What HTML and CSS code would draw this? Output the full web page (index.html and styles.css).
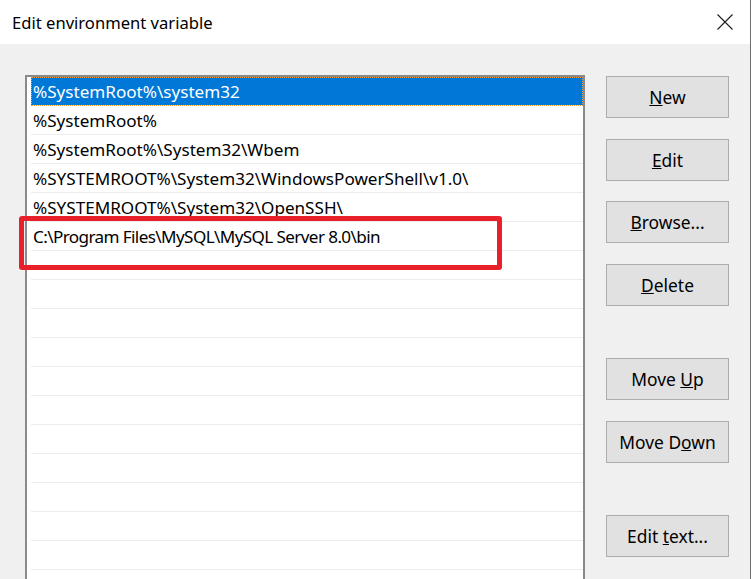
FILE: index.html
```html
<!doctype html>
<html>
<head>
  <link rel="stylesheet" href="styles.css">
</head>
<body>
  <div class="window">
    <div class="titlebar">
      <span class="title">Edit environment variable</span>
      <svg class="close" width="16" height="16" viewBox="0 0 16 16">
        <path d="M0.5 0.5 L15.5 15.5 M15.5 0.5 L0.5 15.5" stroke="#1a1a1a" stroke-width="1.1" fill="none"/>
      </svg>
    </div>

    <div class="content">
      <div class="list">
        <div class="row selected">%SystemRoot%\system32</div>
        <div class="row">%SystemRoot%</div>
        <div class="row">%SystemRoot%\System32\Wbem</div>
        <div class="row">%SYSTEMROOT%\System32\WindowsPowerShell\v1.0\</div>
        <div class="row">%SYSTEMROOT%\System32\OpenSSH\</div>
        <div class="row tight">C:\Program Files\MySQL\MySQL Server 8.0\bin</div>
        <div class="row"></div>
        <div class="row"></div>
        <div class="row"></div>
        <div class="row"></div>
        <div class="row"></div>
        <div class="row"></div>
        <div class="row"></div>
        <div class="row"></div>
        <div class="row"></div>
        <div class="row"></div>
        <div class="row"></div>
      </div>

      <div class="buttons">
        <button class="btn"><u>N</u>ew</button>
        <button class="btn"><u>E</u>dit</button>
        <button class="btn"><u>B</u>rowse...</button>
        <button class="btn"><u>D</u>elete</button>
        <button class="btn spaced">Move <u>U</u>p</button>
        <button class="btn">Move D<u>o</u>wn</button>
        <button class="btn spaced">Edit <u>t</u>ext...</button>
      </div>
    </div>

    <!-- red annotation box around the MySQL entry -->
    <div class="highlight"></div>
  </div>
</body>
</html>
```

FILE: styles.css
```css
body{
  margin: 0;
  font-family: "Noto Sans", "Open Sans", sans-serif;
  color: #000;
}
.window{
  position: relative;
  width: 750px;
  height: 579px;
  background: #f0f0f0;
  border-right: 1px solid #6e6e6e;
  overflow: hidden;
}
.titlebar{
  height: 44px;
  background: #fff;
  display: flex;
  align-items: center;
  justify-content: space-between;
  padding: 0 17px 0 12px;
}
.title{
  font-size: 16.6px;
  margin-top: 1px;
}
.close{
  margin-top: -1px;
}
.content{
  display: flex;
  align-items: flex-start;
  padding: 31px 0 0 25px;
}
.list{
  width: 552px;
  height: 600px;
  background: #fff;
  border: 2px solid #8a8a8a;
  border-bottom: none;
  padding: 0 0 0 4px;
  box-sizing: content-box;
}
.row{
  height: 28px;
  border-bottom: 1px solid #ececec;
  padding-left: 2px;
  font-size: 17.1px;
  line-height: 29px;
  white-space: nowrap;
}
.row.tight{
  letter-spacing: -0.6px;
}
.row.selected{
  background: #0078d7;
  color: #fff;
  outline: 1px dotted #ff9a2e;
  outline-offset: -1px;
  border-bottom-color: #fff;
}
.buttons{
  display: flex;
  flex-direction: column;
  gap: 20.7px;
  margin-left: 21px;
  padding-top: 1px;
}
.btn{
  width: 123px;
  height: 42px;
  background: #e1e1e1;
  border: 1px solid #adadad;
  font-family: "Noto Sans", "Open Sans", sans-serif;
  font-size: 17.4px;
  color: #000;
  padding: 0;
}
.btn.spaced{
  margin-top: 31.5px;
}
.highlight{
  position: absolute;
  left: 19px;
  top: 216px;
  width: 473px;
  height: 44px;
  border: 5px solid #e8202a;
  border-radius: 3px;
}
```
